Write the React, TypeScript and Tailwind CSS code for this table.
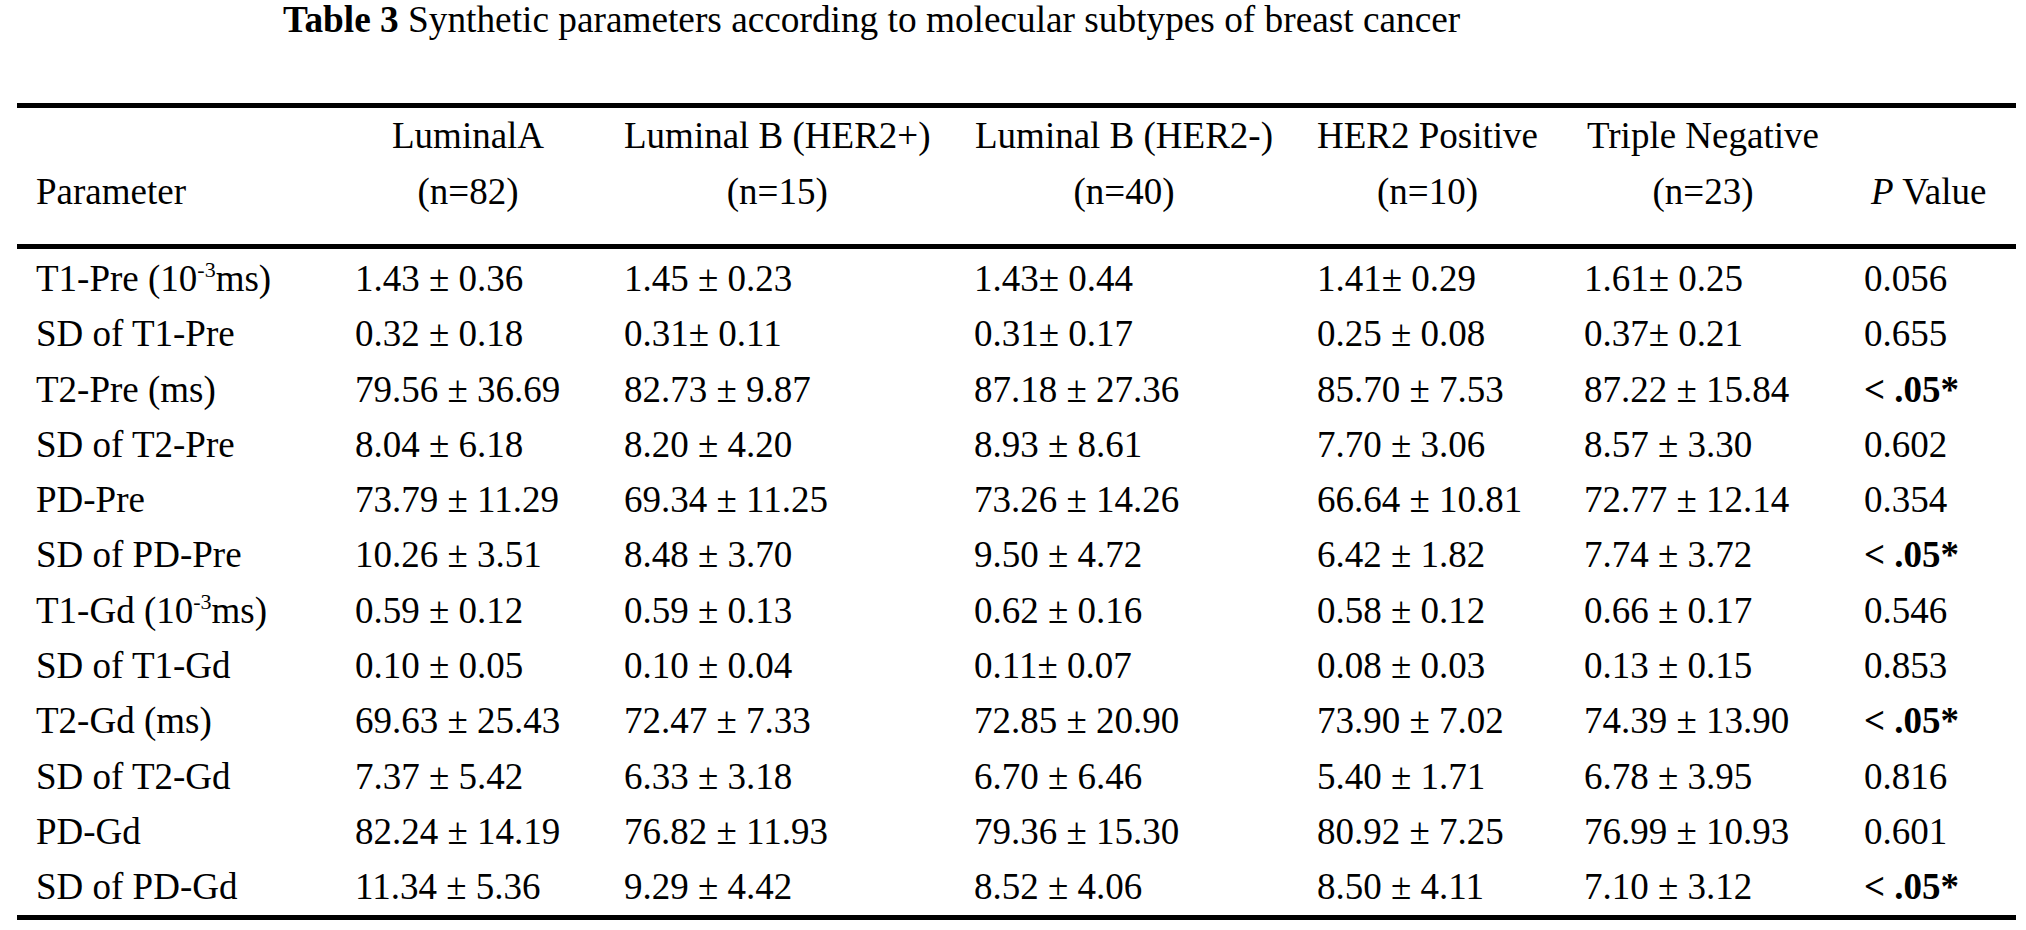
import React from "react";

type Row = { label: React.ReactNode; vals: string[]; p: string; bold?: boolean };

const Sup = () => (
  <sup className="text-[22px] relative top-[-14px] align-baseline leading-none">-3</sup>
);

const rows: Row[] = [
  { label: <>T1-Pre (10<Sup />ms)</>, vals: ["1.43 ± 0.36", "1.45 ± 0.23", "1.43± 0.44", "1.41± 0.29", "1.61± 0.25"], p: "0.056" },
  { label: "SD of T1-Pre", vals: ["0.32 ± 0.18", "0.31± 0.11", "0.31± 0.17", "0.25 ± 0.08", "0.37± 0.21"], p: "0.655" },
  { label: "T2-Pre (ms)", vals: ["79.56 ± 36.69", "82.73 ± 9.87", "87.18 ± 27.36", "85.70 ± 7.53", "87.22 ± 15.84"], p: "< .05*", bold: true },
  { label: "SD of T2-Pre", vals: ["8.04 ± 6.18", "8.20 ± 4.20", "8.93 ± 8.61", "7.70 ± 3.06", "8.57 ± 3.30"], p: "0.602" },
  { label: "PD-Pre", vals: ["73.79 ± 11.29", "69.34 ± 11.25", "73.26 ± 14.26", "66.64 ± 10.81", "72.77 ± 12.14"], p: "0.354" },
  { label: "SD of PD-Pre", vals: ["10.26 ± 3.51", "8.48 ± 3.70", "9.50 ± 4.72", "6.42 ± 1.82", "7.74 ± 3.72"], p: "< .05*", bold: true },
  { label: <>T1-Gd (10<Sup />ms)</>, vals: ["0.59 ± 0.12", "0.59 ± 0.13", "0.62 ± 0.16", "0.58 ± 0.12", "0.66 ± 0.17"], p: "0.546" },
  { label: "SD of T1-Gd", vals: ["0.10 ± 0.05", "0.10 ± 0.04", "0.11± 0.07", "0.08 ± 0.03", "0.13 ± 0.15"], p: "0.853" },
  { label: "T2-Gd (ms)", vals: ["69.63 ± 25.43", "72.47 ± 7.33", "72.85 ± 20.90", "73.90 ± 7.02", "74.39 ± 13.90"], p: "< .05*", bold: true },
  { label: "SD of T2-Gd", vals: ["7.37 ± 5.42", "6.33 ± 3.18", "6.70 ± 6.46", "5.40 ± 1.71", "6.78 ± 3.95"], p: "0.816" },
  { label: "PD-Gd", vals: ["82.24 ± 14.19", "76.82 ± 11.93", "79.36 ± 15.30", "80.92 ± 7.25", "76.99 ± 10.93"], p: "0.601" },
  { label: "SD of PD-Gd", vals: ["11.34 ± 5.36", "9.29 ± 4.42", "8.52 ± 4.06", "8.50 ± 4.11", "7.10 ± 3.12"], p: "< .05*", bold: true },
];

const headers: { l1: string; l2: string; ml: string }[] = [
  { l1: "LuminalA", l2: "(n=82)", ml: "ml-[37px]" },
  { l1: "Luminal B (HER2+)", l2: "(n=15)", ml: "ml-0" },
  { l1: "Luminal B (HER2-)", l2: "(n=40)", ml: "ml-[1px]" },
  { l1: "HER2 Positive", l2: "(n=10)", ml: "ml-0" },
  { l1: "Triple Negative", l2: "(n=23)", ml: "ml-[3px]" },
];

const gridCols = "grid grid-cols-[319px_269px_350px_343px_267px_280px_152px]";

export default function App() {
  return (
    <div className="w-[2026px] h-[930px] bg-white text-black font-['Liberation_Serif','Times_New_Roman',serif] text-[37px] overflow-hidden">
      <div className="h-[40px] leading-[40px] pl-[283px] whitespace-nowrap text-[37.3px]">
        <span className="font-bold">Table 3</span> Synthetic parameters according to molecular subtypes of breast cancer
      </div>

      <div className="ml-[17px] w-[1999px] mt-[63px]">
        <div className="h-[5px] bg-black" />

        <div className={`${gridCols} pl-[19px] pb-[24px]`}>
          <div className="flex flex-col">
            <div className="h-[56px]" />
            <div className="h-[56px] leading-[56px] whitespace-nowrap">Parameter</div>
          </div>
          {headers.map((h, i) => (
            <div key={i} className="flex">
              <div className={`inline-flex flex-col items-center ${h.ml}`}>
                <div className="h-[56px] leading-[56px] whitespace-nowrap">{h.l1}</div>
                <div className="h-[56px] leading-[56px] whitespace-nowrap">{h.l2}</div>
              </div>
            </div>
          ))}
          <div className="flex flex-col">
            <div className="h-[56px]" />
            <div className="h-[56px] leading-[56px] whitespace-nowrap ml-[7px]">
              <span className="italic">P</span> Value
            </div>
          </div>
        </div>

        <div className="h-[5px] bg-black" />

        <div className="pt-[2px]">
          {rows.map((r, i) => (
            <div key={i} className={`${gridCols} pl-[19px] h-[55.3px] leading-[55.3px] whitespace-nowrap`}>
              <div>{r.label}</div>
              {r.vals.map((v, j) => (
                <div key={j}>{v}</div>
              ))}
              <div className={r.bold ? "font-bold" : ""}>{r.p}</div>
            </div>
          ))}
        </div>

        <div className="h-[5px] bg-black" />
      </div>
    </div>
  );
}
